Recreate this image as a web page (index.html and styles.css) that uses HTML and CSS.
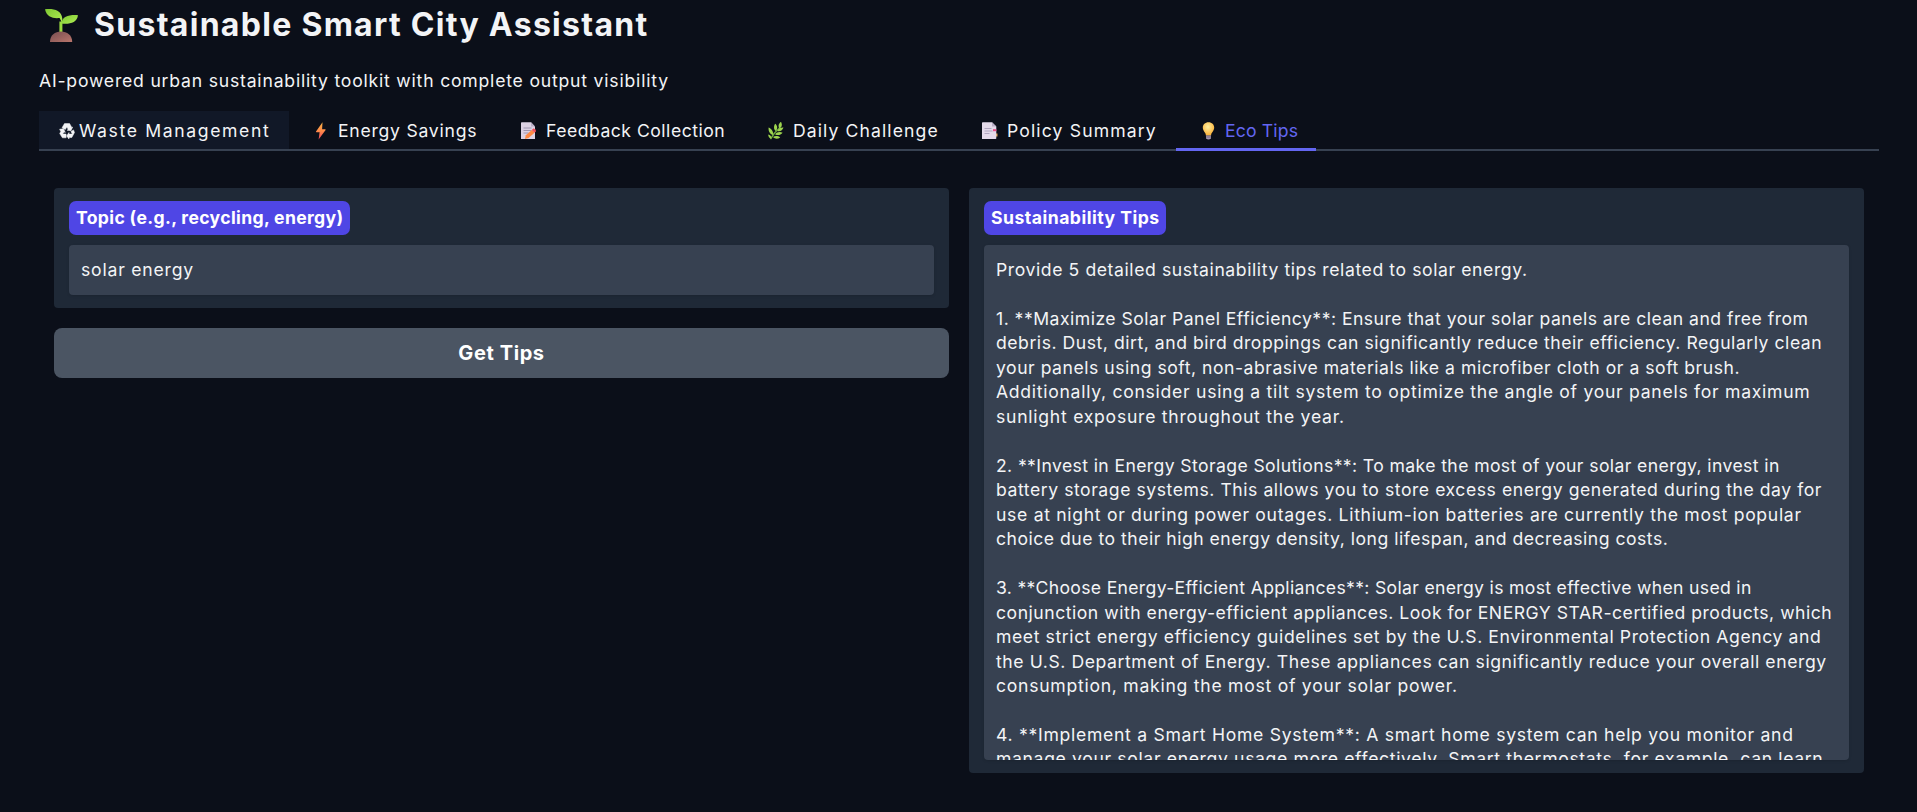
FILE: index.html
```
<!DOCTYPE html>
<html lang="en">
<head>
<meta charset="utf-8">
<title>Sustainable Smart City Assistant</title>
<link rel="stylesheet" href="styles.css">
</head>
<body>
<main class="app">
  <h1 class="title">
    <svg class="sprout" viewBox="0 0 33 33">
      <defs>
        <linearGradient id="leaf" x1="0" y1="0" x2="1" y2="1"><stop offset="0" stop-color="#7fc832"/><stop offset="1" stop-color="#b0ee55"/></linearGradient>
        <linearGradient id="soil" x1="0" y1="0" x2="1" y2="1"><stop offset="0" stop-color="#764d50"/><stop offset="1" stop-color="#b9766c"/></linearGradient>
      </defs>
      <path d="M14.4 24V12.5h3V24z" fill="#9bdc3f"/>
      <path d="M0 .3C8-.6 16.500 1 17.300 9.500l-.2 4.500-2.500-5C8 9.700 1.500 8 0 .3z" fill="url(#leaf)"/>
      <path d="M33 6.200C24 5.700 17.500 7 16.200 14.500c8.300 1 15.800-.8 16.800-8.300z" fill="url(#leaf)"/>
      <path d="M5 33c0-7 5-10.500 11-10.500S27.200 26 27.200 33z" fill="url(#soil)"/>
    </svg>
    <span class="title-text">Sustainable Smart City Assistant</span>
  </h1>
  <p class="subtitle">AI-powered urban sustainability toolkit with complete output visibility</p>

  <nav class="tabs">
    <button class="tab tab-waste">
      <svg class="recycle" viewBox="0 0 16 16">
        <path d="M5.500.6h5.100l2.200 3.800.9-.3-1.700 3.600-4-.5 1.200-.8-1.300-2.500-1.600 2.700L3 4.700zM.6 6.200l3.900-.5 1.800 3.700-1.200-.5L3.700 11h3.400v3.800H3.400L.7 10.500l1.100-1.900zM12 8.500l2.500-1.600 1 2.600-2.700 5H10V16l-2.400-3.100L10 9.500v1.600h3.300z" fill="#f3f4f6" stroke="#f3f4f6" stroke-width=".5"/>
      </svg>
      <span class="label">Waste Management</span>
    </button>
    <button class="tab tab-energy">
      <svg class="emoji" viewBox="0 0 24 18">
        <defs><linearGradient id="bolt" x1="0" y1="0" x2="0" y2="1"><stop offset="0" stop-color="#f9b446"/><stop offset=".5" stop-color="#ff8b49"/><stop offset="1" stop-color="#e8425c"/></linearGradient></defs>
        <path d="M13.500.3 7 9.500q-.2.800.5.800h3.100l-1 7.200 7-9.500q.2-.8-.5-.8h-3z" fill="url(#bolt)"/>
      </svg>
      <span class="label">Energy Savings</span>
    </button>
    <button class="tab tab-feedback">
      <svg class="emoji" viewBox="0 0 24 18">
        <path d="M4 1q0-.7.7-.7h9.300L18 4.500V17H4z" fill="#ddd3e5"/>
        <path d="M14 .3 18 4.500h-4z" fill="#b9aec6"/>
        <path d="M6.500 6h8M6.500 8.500h8M6.500 11h5" stroke="#9a90ab" stroke-width=".9"/>
        <path d="m8 17 .8-3.800 6-5.300 2.700 2.800-6 5.300z" fill="#ff8a45"/>
        <path d="m14.800 7.900 1.500-1.300q2.500-.3 2.800 2.600l-1.600 1.500z" fill="#f2515b"/>
      </svg>
      <span class="label">Feedback Collection</span>
    </button>
    <button class="tab tab-daily">
      <svg class="emoji" viewBox="0 0 24 18">
        <g transform="translate(1 -.4)">
          <path d="M5.500 17.500Q9 11 14.500 6.500" stroke="#6fae3f" stroke-width="1.300" fill="none"/>
          <g fill="#9dd44e">
            <path d="M14.500 7c-2-2.500-.5-5.500 1.500-6.800C17.500 3 17 5.500 14.500 7z"/>
            <path d="M10.800 9.500C8 7.500 9 3.500 10.300 2.200c2.200 2 2.600 5 .5 7.300z"/>
            <path d="M8 13.500C4 12.500 3.300 8.500 3.600 6c3 1.300 5 4 4.400 7.500z"/>
            <path d="M12.300 9.400c1-2.700 4-3.700 6.200-3.400-1 2.800-3.200 4.300-6.200 3.400z"/>
            <path d="M10 12.600c1.800-2.300 5-2.800 7.600-1.500-2 2.400-5 3.100-7.600 1.500z"/>
            <path d="M8 15.500c2-1.600 5-1.400 7.200.3-2.500 1.700-5.200 1.700-7.200-.3z"/>
            <path d="M6.500 16.800C4.500 17 3.200 15 3.200 12.800c2 .2 3.300 2 3.300 4z"/>
          </g>
        </g>
      </svg>
      <span class="label">Daily Challenge</span>
    </button>
    <button class="tab tab-policy">
      <svg class="emoji" viewBox="0 0 24 18">
        <path d="M15 11.500h4.500v3H15z" fill="#e0a04c"/>
        <path d="M4 1q0-.7.7-.7H14L18.300 4.500V16.300q0 .7-.7.7H4z" fill="#e4daea"/>
        <path d="M14 .3l4.300 4.200H14z" fill="#b9aec6"/>
        <path d="M6.500 6.500h7M6.500 9h8M6.500 11.500h5" stroke="#aaa0bb" stroke-width=".9"/>
        <path d="M15 7.200h3.300v2H15z" fill="#ea4c86"/>
      </svg>
      <span class="label">Policy Summary</span>
    </button>
    <button class="tab tab-eco active">
      <svg class="emoji" viewBox="0 0 24 18">
        <defs><radialGradient id="bulb" cx=".45" cy=".35" r=".6"><stop offset="0" stop-color="#fff0a0"/><stop offset="1" stop-color="#fbb43c"/></radialGradient></defs>
        <path d="M12.500.3c-3.400 0-5.700 2.300-5.700 5.300 0 3.600 2.900 4.800 3.100 7.900h5.200c.2-3.100 3.100-4.300 3.100-7.900 0-3-2.300-5.300-5.700-5.300z" fill="url(#bulb)"/>
        <path d="M10 13.500h5v3q-2.500 2-5 0z" fill="#a596ac"/>
        <path d="M10 15h5" stroke="#706078" stroke-width=".8"/>
      </svg>
      <span class="label">Eco Tips</span>
    </button>
  </nav>

  <section class="row">
    <div class="column">
      <div class="panel">
        <span class="badge badge-topic">Topic (e.g., recycling, energy)</span>
        <div class="field field-topic">solar energy</div>
      </div>
      <button class="submit">Get Tips</button>
    </div>
    <div class="column">
      <div class="panel">
        <span class="badge badge-tips">Sustainability Tips</span>
        <div class="field output">
          <div style="letter-spacing:.585px">Provide 5 detailed sustainability tips related to solar energy.</div>
          <br>
          <div style="letter-spacing:.481px">1. **Maximize Solar Panel Efficiency**: Ensure that your solar panels are clean and free from</div>
          <div style="letter-spacing:.534px">debris. Dust, dirt, and bird droppings can significantly reduce their efficiency. Regularly clean</div>
          <div style="letter-spacing:.518px">your panels using soft, non-abrasive materials like a microfiber cloth or a soft brush.</div>
          <div style="letter-spacing:.711px">Additionally, consider using a tilt system to optimize the angle of your panels for maximum</div>
          <div style="letter-spacing:.74px">sunlight exposure throughout the year.</div>
          <br>
          <div style="letter-spacing:.389px">2. **Invest in Energy Storage Solutions**: To make the most of your solar energy, invest in</div>
          <div style="letter-spacing:.55px">battery storage systems. This allows you to store excess energy generated during the day for</div>
          <div style="letter-spacing:.684px">use at night or during power outages. Lithium-ion batteries are currently the most popular</div>
          <div style="letter-spacing:.503px">choice due to their high energy density, long lifespan, and decreasing costs.</div>
          <br>
          <div style="letter-spacing:.325px">3. **Choose Energy-Efficient Appliances**: Solar energy is most effective when used in</div>
          <div style="letter-spacing:.519px">conjunction with energy-efficient appliances. Look for ENERGY STAR-certified products, which</div>
          <div style="letter-spacing:.595px">meet strict energy efficiency guidelines set by the U.S. Environmental Protection Agency and</div>
          <div style="letter-spacing:.575px">the U.S. Department of Energy. These appliances can significantly reduce your overall energy</div>
          <div style="letter-spacing:.73px">consumption, making the most of your solar power.</div>
          <br>
          <div style="letter-spacing:.708px">4. **Implement a Smart Home System**: A smart home system can help you monitor and</div>
          <div style="letter-spacing:.642px">manage your solar energy usage more effectively. Smart thermostats, for example, can learn</div>
        </div>
      </div>
    </div>
  </section>
</main>
</body>
</html>
```
FILE: styles.css
```
* { box-sizing: border-box; }

body {
  margin: 0;
  height: 812px;
  overflow: hidden;
  background: #0b0f19;
  color: #f3f4f6;
  font: 400 17.6px/24.48px Inter, "Open Sans", sans-serif;
}

button { margin: 0; border: 0; font: inherit; color: inherit; }

.app { padding: 5px 38px 0 39px; }

.title {
  display: flex;
  margin: 0;
  height: 40px;
  font-size: 32px;
  line-height: 40px;
  font-weight: 700;
}
.title-text { margin-left: 16px; letter-spacing: 1.29px; white-space: nowrap; }
.sprout { width: 33px; height: 33px; margin: 4px 0 0 6px; }

.subtitle { margin: 24px 0 0; height: 24px; letter-spacing: .8px; white-space: nowrap; }

.tabs {
  display: flex;
  height: 40px;
  margin-top: 18px;
  box-shadow: inset 0 -2px #374151;
}
.tab {
  display: flex;
  align-items: flex-start;
  height: 38px;
  padding: 7.5px 0 0 20px;
  background: none;
  white-space: nowrap;
}
.tab-waste { width: 250px; background: #111827; letter-spacing: 1.632px; }
.tab-energy { width: 208px; letter-spacing: .75px; }
.tab-feedback { width: 247px; letter-spacing: .5px; }
.tab-daily { width: 214px; letter-spacing: 1.09px; }
.tab-policy { width: 218px; letter-spacing: 1.14px; }
.tab-eco { width: 140px; letter-spacing: .16px; }
.tab.active { height: 40px; color: #6366f1; border-bottom: 3px solid #6366f1; }

.emoji { width: 24px; height: 18px; margin: 3px 5px 0 0; }
.recycle { width: 16px; height: 16px; margin: 4.500px 4px 0 0; }

.row { display: flex; gap: 20px; padding: 37px 15px 0 15px; align-items: flex-start; }
.column { flex: 1; display: flex; flex-direction: column; gap: 20px; }

.panel { padding: 13px 15px; border-radius: 4px; background: #1f2937; }

.badge {
  display: block;
  height: 34px;
  padding-left: 7px;
  border-radius: 7px;
  background: #4f46e5;
  color: #fff;
  font-weight: 700;
  line-height: 34px;
  white-space: nowrap;
}
.badge-topic { width: 281px; letter-spacing: .34px; }
.badge-tips { width: 182px; letter-spacing: .48px; }

.field {
  margin-top: 10px;
  padding: 12.800px 12px 0;
  border-radius: 4px;
  background: #374151;
  box-shadow: 0 1px 3px rgba(0, 0, 0, .12);
  overflow: hidden;
  white-space: nowrap;
}
.field-topic { height: 50px; letter-spacing: .79px; }
.output { height: 515px; }

.submit {
  height: 50px;
  padding: 1px 0 0;
  border-radius: 8px;
  background: #4b5563;
  color: #fff;
  font-size: 20px;
  font-weight: 700;
  line-height: 49px;
  letter-spacing: .6px;
}
```
